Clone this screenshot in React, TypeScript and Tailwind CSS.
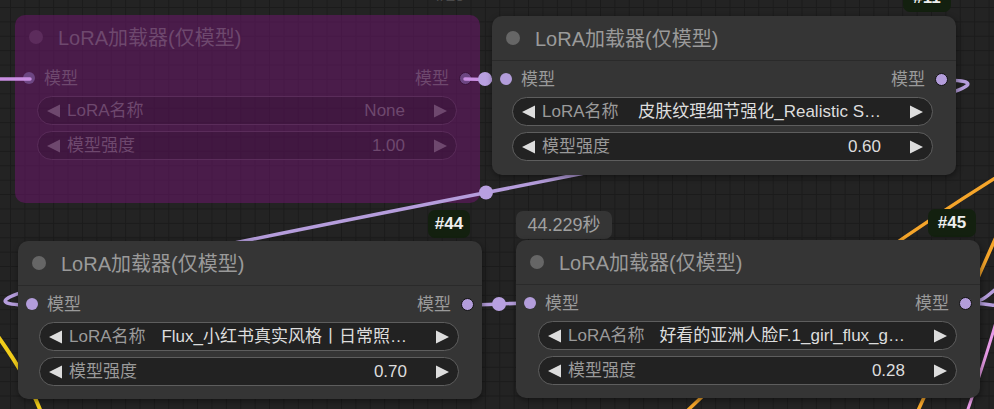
import React from "react";

type Theme = {
  bg: string;
  sep: string;
  circle: string;
  title: string;
  slot: string;
  inDot: string;
  outDot: string;
  wBox: string;
  arrow: string;
  label: string;
  value: string;
};

const normal: Theme = {
  bg: "bg-[#353535] shadow-[1px_2px_6px_rgba(0,0,0,0.45)]",
  sep: "border-b border-[#2a2a2a]",
  circle: "bg-[#666666]",
  title: "text-[#9a9a9a]",
  slot: "text-[#9a9a9a]",
  inDot: "bg-[#b39ddb]",
  outDot: "bg-[#b39ddb] border-[#111111]",
  wBox: "border-[#5e5e5e] bg-[#222222]",
  arrow: "text-[#dddddd]",
  label: "text-[#9a9a9a]",
  value: "text-[#dddddd]",
};

const bypass: Theme = {
  bg: "bg-[rgba(100,24,100,0.6)]",
  sep: "border-b border-transparent",
  circle: "bg-[#5c2c5c]",
  title: "text-[#6e486e]",
  slot: "text-[#6e486e]",
  inDot: "bg-[#6c4682]",
  outDot: "bg-[#6c4682] border-[#3a123a]",
  wBox: "border-[#5a2c5a] bg-[rgba(40,10,40,0.25)]",
  arrow: "text-[#6e486e]",
  label: "text-[#6e486e]",
  value: "text-[#6e486e]",
};

function Tri({ right, className }: { right?: boolean; className: string }) {
  return (
    <svg width="14" height="14" viewBox="0 0 14 14" className={"shrink-0 " + className}>
      {right ? (
        <polygon points="1,0.5 14,7 1,13.5" fill="currentColor" />
      ) : (
        <polygon points="0,7 13,0.5 13,13.5" fill="currentColor" />
      )}
    </svg>
  );
}

function Widget({ t, label, value }: { t: Theme; label: string; value: string }) {
  return (
    <div className={`flex h-[29px] items-center rounded-full border px-[9px] text-[17px] ${t.wBox}`}>
      <Tri className={t.arrow} />
      <span className={`ml-[6px] shrink-0 whitespace-nowrap pt-[1px] ${t.label}`}>{label}</span>
      <span className={`ml-[8px] min-w-0 flex-1 truncate pt-[1px] text-right ${t.value}`}>{value}</span>
      <span className="w-[28px] shrink-0" />
      <Tri right className={t.arrow} />
    </div>
  );
}

function Node({
  t,
  pos,
  wpad,
  name,
  strength,
}: {
  t: Theme;
  pos: string;
  wpad: string;
  name: string;
  strength: string;
}) {
  return (
    <div className={`absolute rounded-[10px] ${pos} ${t.bg}`}>
      <div className={`flex h-[45px] items-center gap-[15px] pl-[14px] ${t.sep}`}>
        <div className={`h-[14px] w-[14px] shrink-0 rounded-full ${t.circle}`} />
        <span className={`whitespace-nowrap pt-[1px] text-[20px] ${t.title}`}>LoRA加载器(仅模型)</span>
      </div>
      <div className="flex h-[36px] items-center px-[8px]">
        <div className={`h-[12px] w-[12px] shrink-0 rounded-full ${t.inDot}`} />
        <span className={`ml-[9px] pt-[2px] text-[17px] ${t.slot}`}>模型</span>
        <div className="flex-1" />
        <span className={`mr-[10px] pt-[2px] text-[17px] ${t.slot}`}>模型</span>
        <div className={`h-[13px] w-[13px] shrink-0 rounded-full border-[1.5px] ${t.outDot}`} />
      </div>
      <div className={`flex flex-col gap-[6px] ${wpad}`}>
        <Widget t={t} label="LoRA名称" value={name} />
        <Widget t={t} label="模型强度" value={strength} />
      </div>
    </div>
  );
}

function Badge({ pos, text }: { pos: string; text: string }) {
  return (
    <div
      className={`absolute flex h-[28px] items-center justify-center rounded-[7px] bg-[#13200f] text-[17px] font-bold text-[#eeeeee] ${pos}`}
    >
      {text}
    </div>
  );
}

export default function App() {
  return (
    <div
      className="relative h-[409px] w-[994px] overflow-hidden bg-[#232323] bg-[linear-gradient(to_right,#1b1b1b_1px,transparent_1px),linear-gradient(to_bottom,#1b1b1b_1px,transparent_1px)] bg-size-[14.4px_14.4px] bg-position-[10px_7px] font-['Liberation_Sans','Noto_Sans_CJK_SC',sans-serif]"
    >
      {/* bypassed node #10 */}
      <div className="absolute left-[436px] top-[-18px] flex h-[28px] items-center text-[17px] font-bold text-[#4a4a4a]">
        #10
      </div>
      <Node
        t={bypass}
        pos="left-[15px] top-[15px] h-[188px] w-[465px]"
        wpad="ml-[22px] mr-[23px]"
        name="None"
        strength="1.00"
      />

      {/* links */}
      <svg className="absolute left-0 top-0" width="994" height="409" viewBox="0 0 994 409">
        <g fill="none" strokeLinecap="round">
          <path d="M 683 415 Q 800 300 1000 175" stroke="#f5a52a" strokeWidth="3.5" />
          <path d="M 916 415 Q 955 330 1000 228" stroke="#f5a52a" strokeWidth="3.5" />
          <path d="M -8 328 Q 30 380 42 415" stroke="#f2cd1a" strokeWidth="4" />
          <path d="M 1002 300 C 992 340 978 380 966 415" stroke="#e79ae6" strokeWidth="3" />
          <path d="M -40 79 L 30 79" stroke="#c98ee2" strokeWidth="3.5" />
          <path d="M 465 79 C 475 79 496 80 506 80" stroke="#c98ee2" strokeWidth="3.5" />
          <path d="M 941 80 C 1175 80 -202 305 32 305" stroke="#b59ddc" strokeWidth="3.5" />
          <path d="M 468 305 C 484 305 514 303 530 303" stroke="#b59ddc" strokeWidth="3.5" />
          <path d="M 966 303 C 985 303 990 292 1000 286" stroke="#b59ddc" strokeWidth="3.5" />
          <path d="M 966 303 C 980 303 990 305 1000 306" stroke="#b59ddc" strokeWidth="3.5" />
        </g>
        <g fill="#b8a0e0">
          <circle cx="485" cy="79" r="7" />
          <circle cx="486" cy="192.5" r="7" />
          <circle cx="499" cy="304" r="7" />
        </g>
      </svg>

      {/* node #11 */}
      <Badge pos="left-[903px] top-[-16px] w-[48px]" text="#11" />
      <Node
        t={normal}
        pos="left-[492px] top-[16px] h-[159px] w-[464px]"
        wpad="ml-[20px] mr-[23px]"
        name="皮肤纹理细节强化_Realistic S…"
        strength="0.60"
      />

      {/* node #44 */}
      <Badge pos="left-[428px] top-[210px] w-[42px]" text="#44" />
      <Node
        t={normal}
        pos="left-[18px] top-[241px] h-[158px] w-[464px]"
        wpad="ml-[21px] mr-[23px]"
        name="Flux_小红书真实风格丨日常照…"
        strength="0.70"
      />

      {/* node #45 */}
      <div className="absolute left-[516px] top-[211px] flex h-[28px] w-[96px] items-center justify-center rounded-[7px] bg-[#353535] text-[18px] text-[#a0a0a0]">
        44.229秒
      </div>
      <Badge pos="left-[928px] top-[209px] w-[48px]" text="#45" />
      <Node
        t={normal}
        pos="left-[516px] top-[240px] h-[158px] w-[464px]"
        wpad="ml-[22px] mr-[23px]"
        name="好看的亚洲人脸F.1_girl_flux_g…"
        strength="0.28"
      />
    </div>
  );
}
